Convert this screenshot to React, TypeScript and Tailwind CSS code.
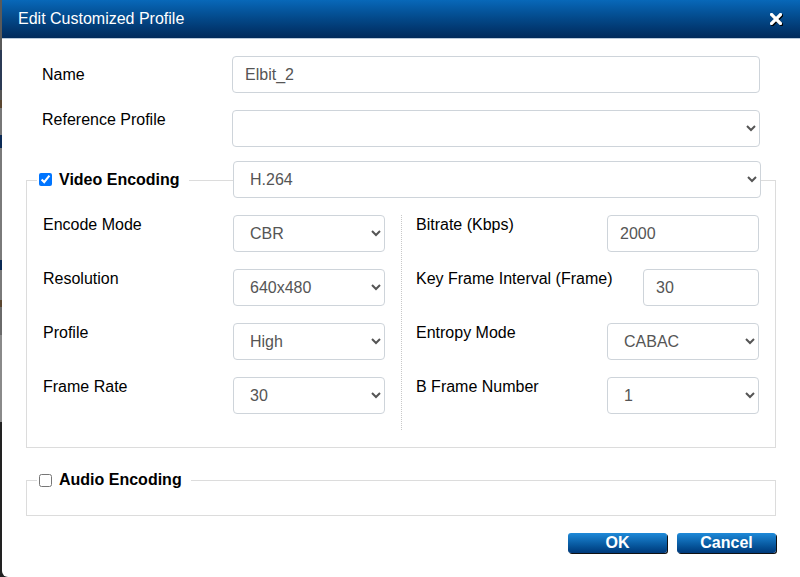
import React from 'react';

const inputCls =
  'h-[37px] rounded-[4px] border border-[#ced4da] bg-white px-3 text-[16px] text-[#555] outline-none';

const Field = ({ label, children }: { label: string; children: React.ReactNode }) => (
  <div className="flex h-[37px] items-start">
    <div className="flex-1 text-[16px] leading-[20px] text-black">{label}</div>
    {children}
  </div>
);

const Sel = ({ value, w = 'w-[152px]' }: { value: string; w?: string }) => (
  <select defaultValue={value} className={`${inputCls} ${w}`}>
    <option>{value}</option>
  </select>
);

const Txt = ({ value, w = 'w-[152px]' }: { value: string; w?: string }) => (
  <input defaultValue={value} className={`${inputCls} ${w}`} />
);

// strip of the page that peeks out left of the dialog
const LeftStrip = () => (
  <div className="flex w-[2px] flex-col">
    <div className="h-[50px] bg-[#5a5a5a]" />
    <div className="h-[40px] bg-[#2b3a55]" />
    <div className="h-[10px] bg-[#555]" />
    <div className="h-[8px] bg-[#5a4630]" />
    <div className="h-[27px] bg-[#777]" />
    <div className="h-[13px] bg-[#0b2a55]" />
    <div className="h-[112px] bg-[#7a7a7a]" />
    <div className="h-[10px] bg-[#0b2a55]" />
    <div className="h-[30px] bg-[#7a7a7a]" />
    <div className="h-[7px] bg-[#5a4630]" />
    <div className="h-[28px] bg-[#6a6a6a]" />
    <div className="h-[87px] bg-[#8a8a8a]" />
    <div className="flex-1 bg-[#222]" />
  </div>
);

export default function App() {
  return (
    <div className="flex h-[577px] w-[800px] overflow-hidden bg-[#222] font-['Liberation_Sans',Arial,sans-serif]">
      <LeftStrip />
      <div className="flex flex-1 flex-col rounded-bl-[6px] bg-white">
        {/* title bar */}
        <div className="flex h-[39px] items-center justify-between border-b border-[#b9cadb] bg-gradient-to-b from-[#0868b9] to-[#012a5b] pl-[16px] pr-[18px]">
          <span className="text-[16px] text-white">Edit Customized Profile</span>
          <svg width="12" height="12" viewBox="0 0 12 12" className="drop-shadow-[1px_1px_0_#000]">
            <path d="M1.5 1.5 L10.5 10.5 M10.5 1.5 L1.5 10.5" stroke="#fff" strokeWidth="3.2" strokeLinecap="square" />
          </svg>
        </div>

        {/* name + reference */}
        <div className="mt-[17px] flex h-[37px] items-start pl-[40px]">
          <div className="w-[190px] pt-[9px] text-[16px] leading-[20px] text-black">Name</div>
          <Txt value="Elbit_2" w="w-[528px]" />
        </div>
        <div className="mt-[17px] flex h-[37px] items-start pl-[40px]">
          <div className="w-[190px] text-[16px] leading-[20px] text-black">Reference Profile</div>
          <select defaultValue="" className={`${inputCls} w-[528px]`}>
            <option value=""></option>
          </select>
        </div>

        {/* video encoding */}
        <div className="ml-[24px] mt-[14px] w-[750px]">
          <div className="flex h-[37px] items-center">
            <div className="h-[18px] w-[11px] self-end border-l border-t border-[#dcdcdc]" />
            <label className="flex items-center pl-[2px] pr-[9px]">
              <input type="checkbox" defaultChecked className="m-0 h-[13px] w-[13px] accent-[#0075ff]" />
              <span className="ml-[7px] text-[16px] font-bold text-black">Video Encoding</span>
            </label>
            <div className="h-[18px] flex-1 self-end border-t border-[#dcdcdc]" />
            <Sel value="H.264" w="w-[528px]" />
            <div className="h-[18px] w-[15px] self-end border-r border-t border-[#dcdcdc]" />
          </div>
          <div className="flex border-x border-b border-[#dcdcdc] pb-[17px] pl-[16px] pr-[16px] pt-[17px]">
            <div className="flex w-[342px] flex-col gap-[17px]">
              <Field label="Encode Mode"><Sel value="CBR" /></Field>
              <Field label="Resolution"><Sel value="640x480" /></Field>
              <Field label="Profile"><Sel value="High" /></Field>
              <Field label="Frame Rate"><Sel value="30" /></Field>
            </div>
            <div className="ml-[16px] mr-[14px] h-[215px] border-l border-dotted border-[#c8c8c8]" />
            <div className="flex flex-1 flex-col gap-[17px]">
              <Field label="Bitrate (Kbps)"><Txt value="2000" /></Field>
              <Field label="Key Frame Interval (Frame)"><Txt value="30" w="w-[116px]" /></Field>
              <Field label="Entropy Mode"><Sel value="CABAC" /></Field>
              <Field label="B Frame Number"><Sel value="1" /></Field>
            </div>
          </div>
        </div>

        {/* audio encoding */}
        <div className="ml-[24px] mt-[22px] w-[750px]">
          <div className="flex h-[20px] items-center">
            <div className="h-[10px] w-[11px] self-end border-l border-t border-[#dcdcdc]" />
            <label className="flex items-center pl-[2px] pr-[9px]">
              <input type="checkbox" className="m-0 h-[13px] w-[13px]" />
              <span className="ml-[7px] text-[16px] font-bold text-black">Audio Encoding</span>
            </label>
            <div className="h-[10px] flex-1 self-end border-r border-t border-[#dcdcdc]" />
          </div>
          <div className="h-[26px] border-x border-b border-[#dcdcdc]" />
        </div>

        {/* buttons */}
        <div className="ml-[24px] mt-[17px] flex w-[750px] justify-end gap-[10px]">
          <button className="h-[20px] w-[99px] rounded-[3px] bg-gradient-to-b from-[#1e8ad9] to-[#00397a] pb-[2px] text-[16px] font-bold leading-[17px] text-white shadow-[1px_1px_0_#111]">
            OK
          </button>
          <button className="h-[20px] w-[99px] rounded-[3px] bg-gradient-to-b from-[#1e8ad9] to-[#00397a] pb-[2px] text-[16px] font-bold leading-[17px] text-white shadow-[1px_1px_0_#111]">
            Cancel
          </button>
        </div>
      </div>
    </div>
  );
}
